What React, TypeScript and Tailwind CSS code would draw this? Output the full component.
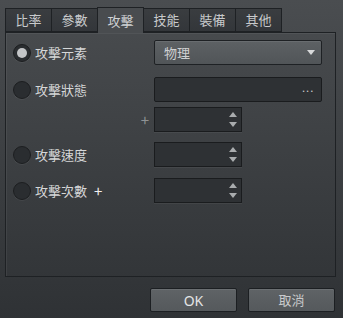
import React from "react";

const font = { fontFamily: '"Noto Sans CJK TC", "Noto Sans CJK SC", sans-serif' };

function Radio({ checked }: { checked?: boolean }) {
  return (
    <div className="w-[18px] h-[18px] rounded-full bg-[#2a2d30] border border-[#1c1e20] shadow-[0_1px_0_rgba(255,255,255,0.06)] flex items-center justify-center">
      {checked && <div className="w-[10px] h-[10px] rounded-full bg-[#c4c6c8]" />}
    </div>
  );
}

function Spin() {
  return (
    <div className="w-[88px] h-[25px] bg-[#2e3134] border border-[#1a1c1e] shadow-[0_1px_0_rgba(255,255,255,0.05)] flex items-center justify-end pr-[4px]">
      <div className="flex flex-col items-center gap-[5px]">
        <svg width="8" height="5" viewBox="0 0 8 5"><path d="M0 5 L4 0 L8 5 Z" fill="#a9acae" /></svg>
        <svg width="8" height="5" viewBox="0 0 8 5"><path d="M0 0 L4 5 L8 0 Z" fill="#a9acae" /></svg>
      </div>
    </div>
  );
}

const tabs = ["比率", "參數", "攻擊", "技能", "裝備", "其他"];

export default function App() {
  return (
    <div
      className="w-[343px] h-[318px] bg-gradient-to-b from-[#4a4d50] to-[#2f3235] flex flex-col text-[13px] text-[#d6d7d8] overflow-hidden"
      style={font}
    >
      <div className="flex pl-[5px] pt-[6px] h-[32px] items-end">
        {tabs.map((t, i) => {
          const active = i === 2;
          return (
            <div
              key={t}
              className={
                active
                  ? "relative z-10 w-[47px] h-[26px] -ml-px mb-[-1px] border border-b-0 border-[#1e2124] bg-[#494c4f] flex items-center justify-center text-[#d0d2d4]"
                  : "w-[47px] h-[24px] border border-[#1e2124] -ml-px first:ml-0 bg-gradient-to-b from-[#3a3d40] to-[#33363a] flex items-center justify-center text-[#c8cacc]"
              }
            >
              {t}
            </div>
          );
        })}
      </div>
      <div className="ml-[5px] w-[331px] h-[245px] border border-[#1e2124] shadow-[inset_1px_1px_0_rgba(255,255,255,0.06)] flex flex-col pt-[7px]">
        <div className="flex items-center h-[25px]">
          <div className="w-[148px] flex items-center pl-[7px] gap-[4px]">
            <Radio checked />
            <span>攻擊元素</span>
          </div>
          <div className="w-[168px] h-[25px] rounded-[2px] border border-[#1e2124] bg-gradient-to-b from-[#5d6164] to-[#515558] flex items-center justify-between pl-[9px] pr-[6px] text-[#cfd0d2] shadow-[inset_0_1px_0_rgba(255,255,255,0.08)]">
            <span>物理</span>
            <svg width="8" height="5" viewBox="0 0 8 5"><path d="M0 0 L4 5 L8 0 Z" fill="#d8d9da" /></svg>
          </div>
        </div>
        <div className="flex items-center h-[25px] mt-[12px]">
          <div className="w-[148px] flex items-center pl-[7px] gap-[4px]">
            <Radio />
            <span>攻擊狀態</span>
          </div>
          <div className="w-[168px] h-[25px] rounded-[2px] border border-[#1a1c1e] bg-[#2e3134] flex items-center justify-end pr-[7px] text-[#c4c6c8]">
            <span className="text-[13px] leading-none tracking-[0.5px] -mt-[4px]" style={{ fontFamily: '"Liberation Sans", sans-serif' }}>...</span>
          </div>
        </div>
        <div className="flex items-center h-[25px] mt-[5px]">
          <div className="w-[148px] flex justify-end pr-[5px] text-[#8f9294] text-[15px] leading-none">+</div>
          <Spin />
        </div>
        <div className="flex items-center h-[25px] mt-[10px]">
          <div className="w-[148px] flex items-center pl-[7px] gap-[4px]">
            <Radio />
            <span>攻擊速度</span>
          </div>
          <Spin />
        </div>
        <div className="flex items-center h-[25px] mt-[11px]">
          <div className="w-[148px] flex items-center pl-[7px] gap-[4px]">
            <Radio />
            <span>攻擊次數</span>
            <span className="ml-[3px] text-[#f0f0f0] text-[15px] leading-none">+</span>
          </div>
          <Spin />
        </div>
      </div>
      <div className="flex justify-end gap-[11px] pr-[8px] mt-[11px]">
        <button className="w-[87px] h-[24px] rounded-[2px] border border-[#1c1f22] bg-gradient-to-b from-[#5f6366] to-[#55595c] text-[#e4e5e6] text-[14px] flex items-center justify-center shadow-[inset_0_1px_0_rgba(255,255,255,0.08)]" style={{ fontFamily: '"Noto Sans", sans-serif' }}>
          OK
        </button>
        <button className="w-[87px] h-[24px] rounded-[2px] border border-[#1c1f22] bg-gradient-to-b from-[#5f6366] to-[#55595c] text-[#c9cacc] text-[13px] flex items-center justify-center shadow-[inset_0_1px_0_rgba(255,255,255,0.08)]">
          取消
        </button>
      </div>
    </div>
  );
}
